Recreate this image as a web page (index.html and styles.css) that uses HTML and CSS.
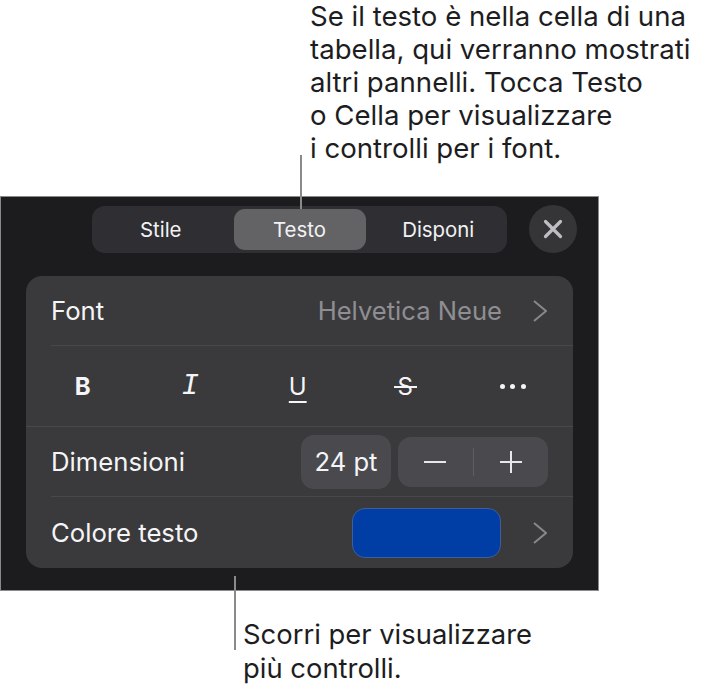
FILE: index.html
```html
<!DOCTYPE html>
<html lang="it">
<head>
    <meta charset="UTF-8">
    <meta name="viewport" content="width=device-width, initial-scale=1.0">
    <title>Pannello Testo</title>
    <link rel="stylesheet" href="styles.css">
</head>
<body>
    <div class="page">
        <!-- Top callout -->
        <p class="note note-top">Se il testo è nella cella di una<br>tabella, qui verranno mostrati<br>altri pannelli. Tocca Testo<br>o Cella per visualizzare<br>i controlli per i font.</p>
        <span class="leader leader-top"></span>

        <!-- Panel -->
        <div class="panel">
            <div class="toolbar">
                <div class="tabs">
                    <span class="tab">Stile</span>
                    <span class="tab active">Testo</span>
                    <span class="tab">Disponi</span>
                </div>
                <span class="close">
                    <svg width="22" height="22" viewBox="0 0 22 22"><path d="M3.5 3.5L18.5 18.5M18.5 3.5L3.5 18.5" stroke="#bdbdc2" stroke-width="3.2" stroke-linecap="round"/></svg>
                </span>
            </div>

            <div class="card">
                <div class="row row-font">
                    <span class="label">Font</span>
                    <span class="value">Helvetica Neue</span>
                    <svg class="chevron" width="14" height="22" viewBox="0 0 14 22"><path d="M1 1L13 11L1 21" fill="none" stroke="#87878c" stroke-width="2"/></svg>
                </div>
                <div class="row row-styles">
                    <span class="style style-b">B</span>
                    <span class="style style-i">I</span>
                    <span class="style style-u">U</span>
                    <span class="style style-s"><span class="strike">S</span></span>
                    <span class="style style-more"><i></i><i></i><i></i></span>
                </div>
                <div class="row row-size">
                    <span class="label">Dimensioni</span>
                    <span class="size">24 pt</span>
                    <div class="stepper">
                        <svg width="24" height="24" viewBox="0 0 24 24"><path d="M1 12H23" stroke="#e8e8ea" stroke-width="2"/></svg>
                        <span class="stepper-line"></span>
                        <svg width="24" height="24" viewBox="0 0 24 24"><path d="M1 12H23M12 1V23" stroke="#e8e8ea" stroke-width="2"/></svg>
                    </div>
                </div>
                <div class="row row-color">
                    <span class="label">Colore testo</span>
                    <span class="swatch"></span>
                    <svg class="chevron" width="14" height="22" viewBox="0 0 14 22"><path d="M1 1L13 11L1 21" fill="none" stroke="#87878c" stroke-width="2"/></svg>
                </div>
            </div>
        </div>

        <!-- Bottom callout -->
        <span class="leader leader-bottom"></span>
        <p class="note note-bottom">Scorri per visualizzare<br>più controlli.</p>
    </div>
</body>
</html>
```

FILE: styles.css
```css
/* Base Styles */
html, body {
    margin: 0;
    padding: 0;
    background: #fff;
    font-family: 'Inter', 'Liberation Sans', sans-serif;
}

.page {
    position: relative;
    width: 702px;
    height: 689px;
    overflow: hidden;
}

/* Callouts */
.note {
    margin: 0;
    color: #1d1d1f;
    font-size: 27.6px;
    line-height: 33px;
}

.note-top {
    height: 196px;
    box-sizing: border-box;
    padding-left: 310px;
}

.note-bottom {
    padding: 27px 0 0 243px;
    font-size: 27.4px;
    line-height: 33.5px;
}

.leader {
    position: absolute;
    width: 2px;
    background: #8a8a8a;
    z-index: 1;
}

.leader-top {
    left: 300px;
    top: 155px;
    height: 54px;
}

.leader-bottom {
    left: 234px;
    top: 576px;
    height: 74px;
}

/* Panel */
.panel {
    box-sizing: border-box;
    width: 599px;
    height: 395px;
    padding: 8px 0 0 25px;
    background: #1c1c1e;
    border: 1px solid #8a8a8a;
}

.toolbar {
    display: flex;
    align-items: center;
    gap: 22px;
    padding-left: 66px;
}

.tabs {
    display: flex;
    width: 415px;
    height: 47px;
    box-sizing: border-box;
    padding: 3px 0;
    background: #2f2f33;
    border-radius: 13px;
}

.tab {
    flex: 1;
    display: flex;
    align-items: center;
    justify-content: center;
    color: #f2f2f4;
    font-size: 20.4px;
    border-radius: 11px;
}

.tab:first-child {
    padding-right: 4px;
}

.tab:last-child {
    padding-left: 4px;
}

.tab.active {
    flex: 0 0 132px;
    background: #636366;
}

.close {
    display: flex;
    align-items: center;
    justify-content: center;
    width: 48px;
    height: 48px;
    border-radius: 50%;
    background: #353538;
}

/* Card */
.card {
    margin-top: 23px;
    width: 547px;
    height: 292px;
    background: #3a3a3c;
    border-radius: 16px;
    color: #f5f5f7;
}

.row {
    display: flex;
    align-items: center;
    box-sizing: border-box;
    margin-left: 25px;
    padding-right: 25px;
    border-bottom: 1px solid #48484b;
}

.row:last-child {
    border-bottom: none;
}

.row-font {
    height: 70px;
}

.row-styles {
    height: 81px;
    margin-left: 0;
    padding: 0 0 0 3px;
}

.row-size {
    height: 70px;
}

.row-color {
    height: 71px;
}

.label {
    flex: 1;
    font-size: 25.7px;
}

.value {
    color: #8e8e93;
    font-size: 25.6px;
    margin-right: 31px;
}

.chevron {
    margin-right: 1px;
}

/* Style buttons */
.style {
    flex: 0 0 107.5px;
    text-align: center;
    font-size: 24px;
}

.style-b {
    font-weight: 700;
}

.style-i {
    font-family: 'Liberation Mono', monospace;
    font-size: 29px;
    font-style: italic;
}

.style-u {
    text-decoration: underline;
    text-underline-offset: 6px;
    text-decoration-thickness: 1.5px;
}

.strike {
    position: relative;
}

.strike::after {
    content: "";
    position: absolute;
    left: -4px;
    right: -4px;
    top: 50%;
    height: 2px;
    background: #f5f5f7;
}

.style-more {
    display: flex;
    justify-content: center;
    gap: 5.5px;
}

.style-more i {
    width: 5px;
    height: 5px;
    border-radius: 50%;
    background: #f5f5f7;
}

/* Size controls */
.size {
    display: flex;
    align-items: center;
    justify-content: center;
    width: 90px;
    height: 54px;
    margin-right: 7px;
    background: #4a4a4e;
    border-radius: 13px;
    font-size: 25.6px;
}

.stepper {
    display: flex;
    align-items: center;
    justify-content: space-between;
    box-sizing: border-box;
    width: 150px;
    height: 50px;
    padding: 0 25px 0 25px;
    background: #4a4a4e;
    border-radius: 13px;
}

.stepper-line {
    width: 1px;
    height: 28px;
    background: #5e5e62;
}

/* Colour row */
.swatch {
    box-sizing: border-box;
    width: 149px;
    height: 50px;
    margin-right: 32px;
    background: #003da5;
    border: 1px solid #3f5f95;
    border-radius: 13px;
}
```
